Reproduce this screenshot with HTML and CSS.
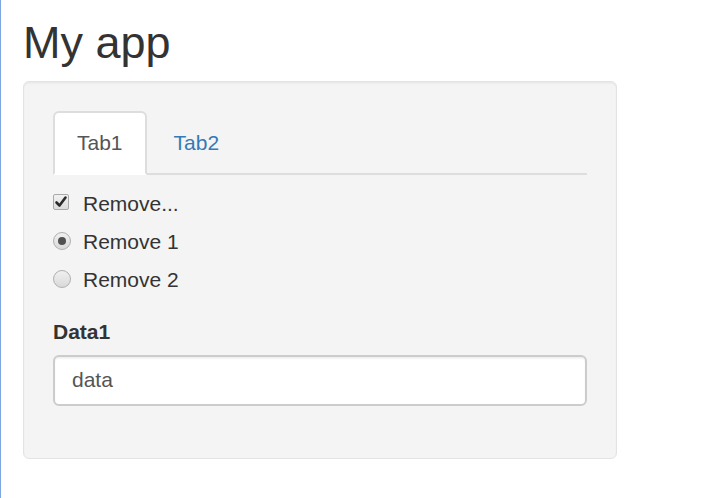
FILE: index.html
```html
<!DOCTYPE html>
<html lang="en">
<head>
    <meta charset="UTF-8">
    <meta name="viewport" content="width=device-width, initial-scale=1.0">
    <title>My app</title>
    <link rel="stylesheet" href="styles.css">
</head>
<body>
    <div class="page">
        <h2 class="title">My app</h2>

        <div class="well">
            <ul class="nav-tabs">
                <li class="active"><a href="#tab1">Tab1</a></li>
                <li><a href="#tab2">Tab2</a></li>
            </ul>

            <div class="tab-content">
                <label class="option">
                    <span class="box checked">
                        <svg width="14" height="14" viewBox="0 0 14 14">
                            <path d="M2.5 7.5 L5.5 10.5 L11.5 2.5" fill="none" stroke="#2b2b2b" stroke-width="2.6" stroke-linecap="round" stroke-linejoin="round"/>
                        </svg>
                    </span>
                    <span>Remove...</span>
                </label>

                <div class="radio-group">
                    <label class="option">
                        <span class="dot checked"></span>
                        <span>Remove 1</span>
                    </label>
                    <label class="option">
                        <span class="dot"></span>
                        <span>Remove 2</span>
                    </label>
                </div>

                <div class="form-group">
                    <label class="control-label" for="data1">Data1</label>
                    <input id="data1" class="form-control" type="text" value="data">
                </div>
            </div>
        </div>
    </div>
</body>
</html>
```

FILE: styles.css
```css
* {
    box-sizing: border-box;
}

body {
    margin: 0;
    font-family: "Liberation Sans", Arial, sans-serif;
    font-size: 21px;
    line-height: 30px;
    color: #333;
    background: #fff;
}

.page {
    min-height: 498px;
    border-left: 1px solid #7ea6e0;
    padding: 0 22px;
    overflow: hidden;
}

.title {
    margin: 18px 0 13px;
    font-size: 45px;
    line-height: 49.5px;
    font-weight: normal;
    color: #333;
}

.well {
    width: 594px;
    background-color: #f4f4f4;
    border: 1px solid #e3e3e3;
    border-radius: 6px;
    box-shadow: inset 0 1.5px 1.5px rgba(0, 0, 0, 0.05);
    padding: 29px;
}

.nav-tabs {
    list-style: none;
    margin: 0;
    padding: 0;
    display: flex;
    border-bottom: 2px solid #ddd;
}

.nav-tabs li {
    margin-right: 3px;
    margin-bottom: -2px;
}

.nav-tabs a {
    display: block;
    padding: 15px 22px;
    border: 2px solid transparent;
    border-radius: 6px 6px 0 0;
    color: #337ab7;
    text-decoration: none;
}

.nav-tabs .active a {
    color: #555;
    background-color: #fff;
    border-color: #ddd #ddd transparent;
}

.tab-content {
    display: flex;
    flex-direction: column;
    padding-top: 14px;
}

.radio-group {
    display: flex;
    flex-direction: column;
    gap: 7.5px;
    margin-top: 8.5px;
}

.option {
    display: flex;
    align-items: flex-start;
}

.box {
    width: 16px;
    height: 16px;
    margin: 5px 14px 0 0;
    border: 1px solid #a9a9a9;
    border-radius: 2px;
    background: linear-gradient(#f2f2f2, #dcdcdc);
    display: flex;
    align-items: center;
    justify-content: center;
}

.dot {
    width: 18px;
    height: 18px;
    margin: 5px 12px 0 0;
    border: 1px solid #b0b0b0;
    border-radius: 50%;
    background: linear-gradient(#f0f0f0, #d9d9d9);
    display: flex;
    align-items: center;
    justify-content: center;
}

.dot.checked::after {
    content: "";
    width: 8px;
    height: 8px;
    border-radius: 50%;
    background: #505050;
}

.form-group {
    margin-top: 22.5px;
    margin-bottom: 23.5px;
    display: flex;
    flex-direction: column;
}

.control-label {
    font-weight: bold;
    margin-bottom: 7.5px;
}

.form-control {
    height: 51px;
    width: 100%;
    padding: 0 17px;
    font-family: inherit;
    font-size: 21px;
    color: #555;
    background: #fff;
    border: 2px solid #ccc;
    border-radius: 6px;
    box-shadow: inset 0 1.5px 1.5px rgba(0, 0, 0, 0.075);
    outline: none;
}
```
